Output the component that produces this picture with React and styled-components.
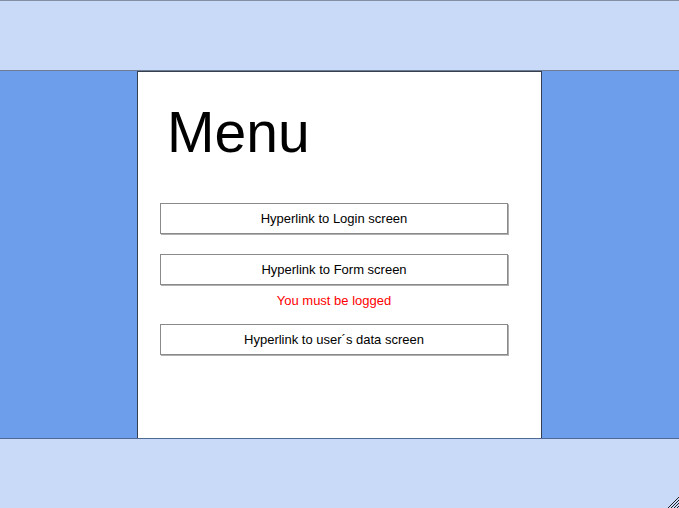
import React from "react";
import styled, { createGlobalStyle } from "styled-components";

const GlobalStyle = createGlobalStyle`
  html, body {
    margin: 0;
    padding: 0;
    background: #c9daf8;
    font-family: "Liberation Sans", Arial, sans-serif;
  }
`;

const Page = styled.div`
  position: relative;
  width: 679px;
  height: 508px;
  display: flex;
  flex-direction: column;
  background: #c9daf8;
  overflow: hidden;
`;

const Band = styled.div`
  height: ${(p) => p.$h}px;
  background: #c9daf8;
  border-top: ${(p) => (p.$top ? "1px solid #848fa3" : "none")};
  border-bottom: ${(p) => (p.$bottom ? "1px solid #6f7d94" : "none")};
  flex-shrink: 0;
`;

const Middle = styled.div`
  height: 367px;
  background: #6d9eeb;
  border-bottom: 1px solid #4e6a94;
  display: flex;
  justify-content: center;
  flex-shrink: 0;
`;

const Card = styled.div`
  width: 405px;
  box-sizing: border-box;
  background: #ffffff;
  border: 1px solid #353f4f;
  border-bottom: none;
  display: flex;
  flex-direction: column;
  padding: 0 0 0 22px;
`;

const Title = styled.h1`
  margin: 27px 0 0 7px;
  font-size: 57px;
  font-weight: 400;
  line-height: 66px;
  color: #000;
`;

const Links = styled.div`
  display: flex;
  flex-direction: column;
  margin-top: 38px;
  width: 348px;
`;

const LinkButton = styled.a`
  display: flex;
  align-items: center;
  justify-content: center;
  height: 29px;
  border: 1px solid #8a8a8a;
  box-shadow: 1px 1px 0 #b0b0b0;
  font-size: 13px;
  color: #000;
  text-decoration: none;
  margin-bottom: ${(p) => p.$gap}px;
`;

const Note = styled.div`
  text-align: center;
  font-size: 13px;
  color: #ff0000;
  height: 15px;
  line-height: 15px;
  margin: -12px 0 16px;
`;

const Grip = styled.svg`
  position: absolute;
  right: 0;
  bottom: 0;
`;

export default function App() {
  return (
    <>
      <GlobalStyle />
      <Page>
        <Band $h={69} $top $bottom />
        <Middle>
          <Card>
            <Title>Menu</Title>
            <Links>
              <LinkButton href="#" $gap={20}>Hyperlink to Login screen</LinkButton>
              <LinkButton href="#" $gap={20}>Hyperlink to Form screen</LinkButton>
              <Note>You must be logged</Note>
              <LinkButton href="#" $gap={0}>Hyperlink to user´s data screen</LinkButton>
            </Links>
          </Card>
        </Middle>
        <Band $h={69} />
        <Grip width="12" height="12" viewBox="0 0 12 12">
          <path d="M12 1 L1 12 M12 4 L4 12 M12 7 L7 12 M12 10 L10 12" stroke="#222" strokeWidth="1" />
        </Grip>
      </Page>
    </>
  );
}
